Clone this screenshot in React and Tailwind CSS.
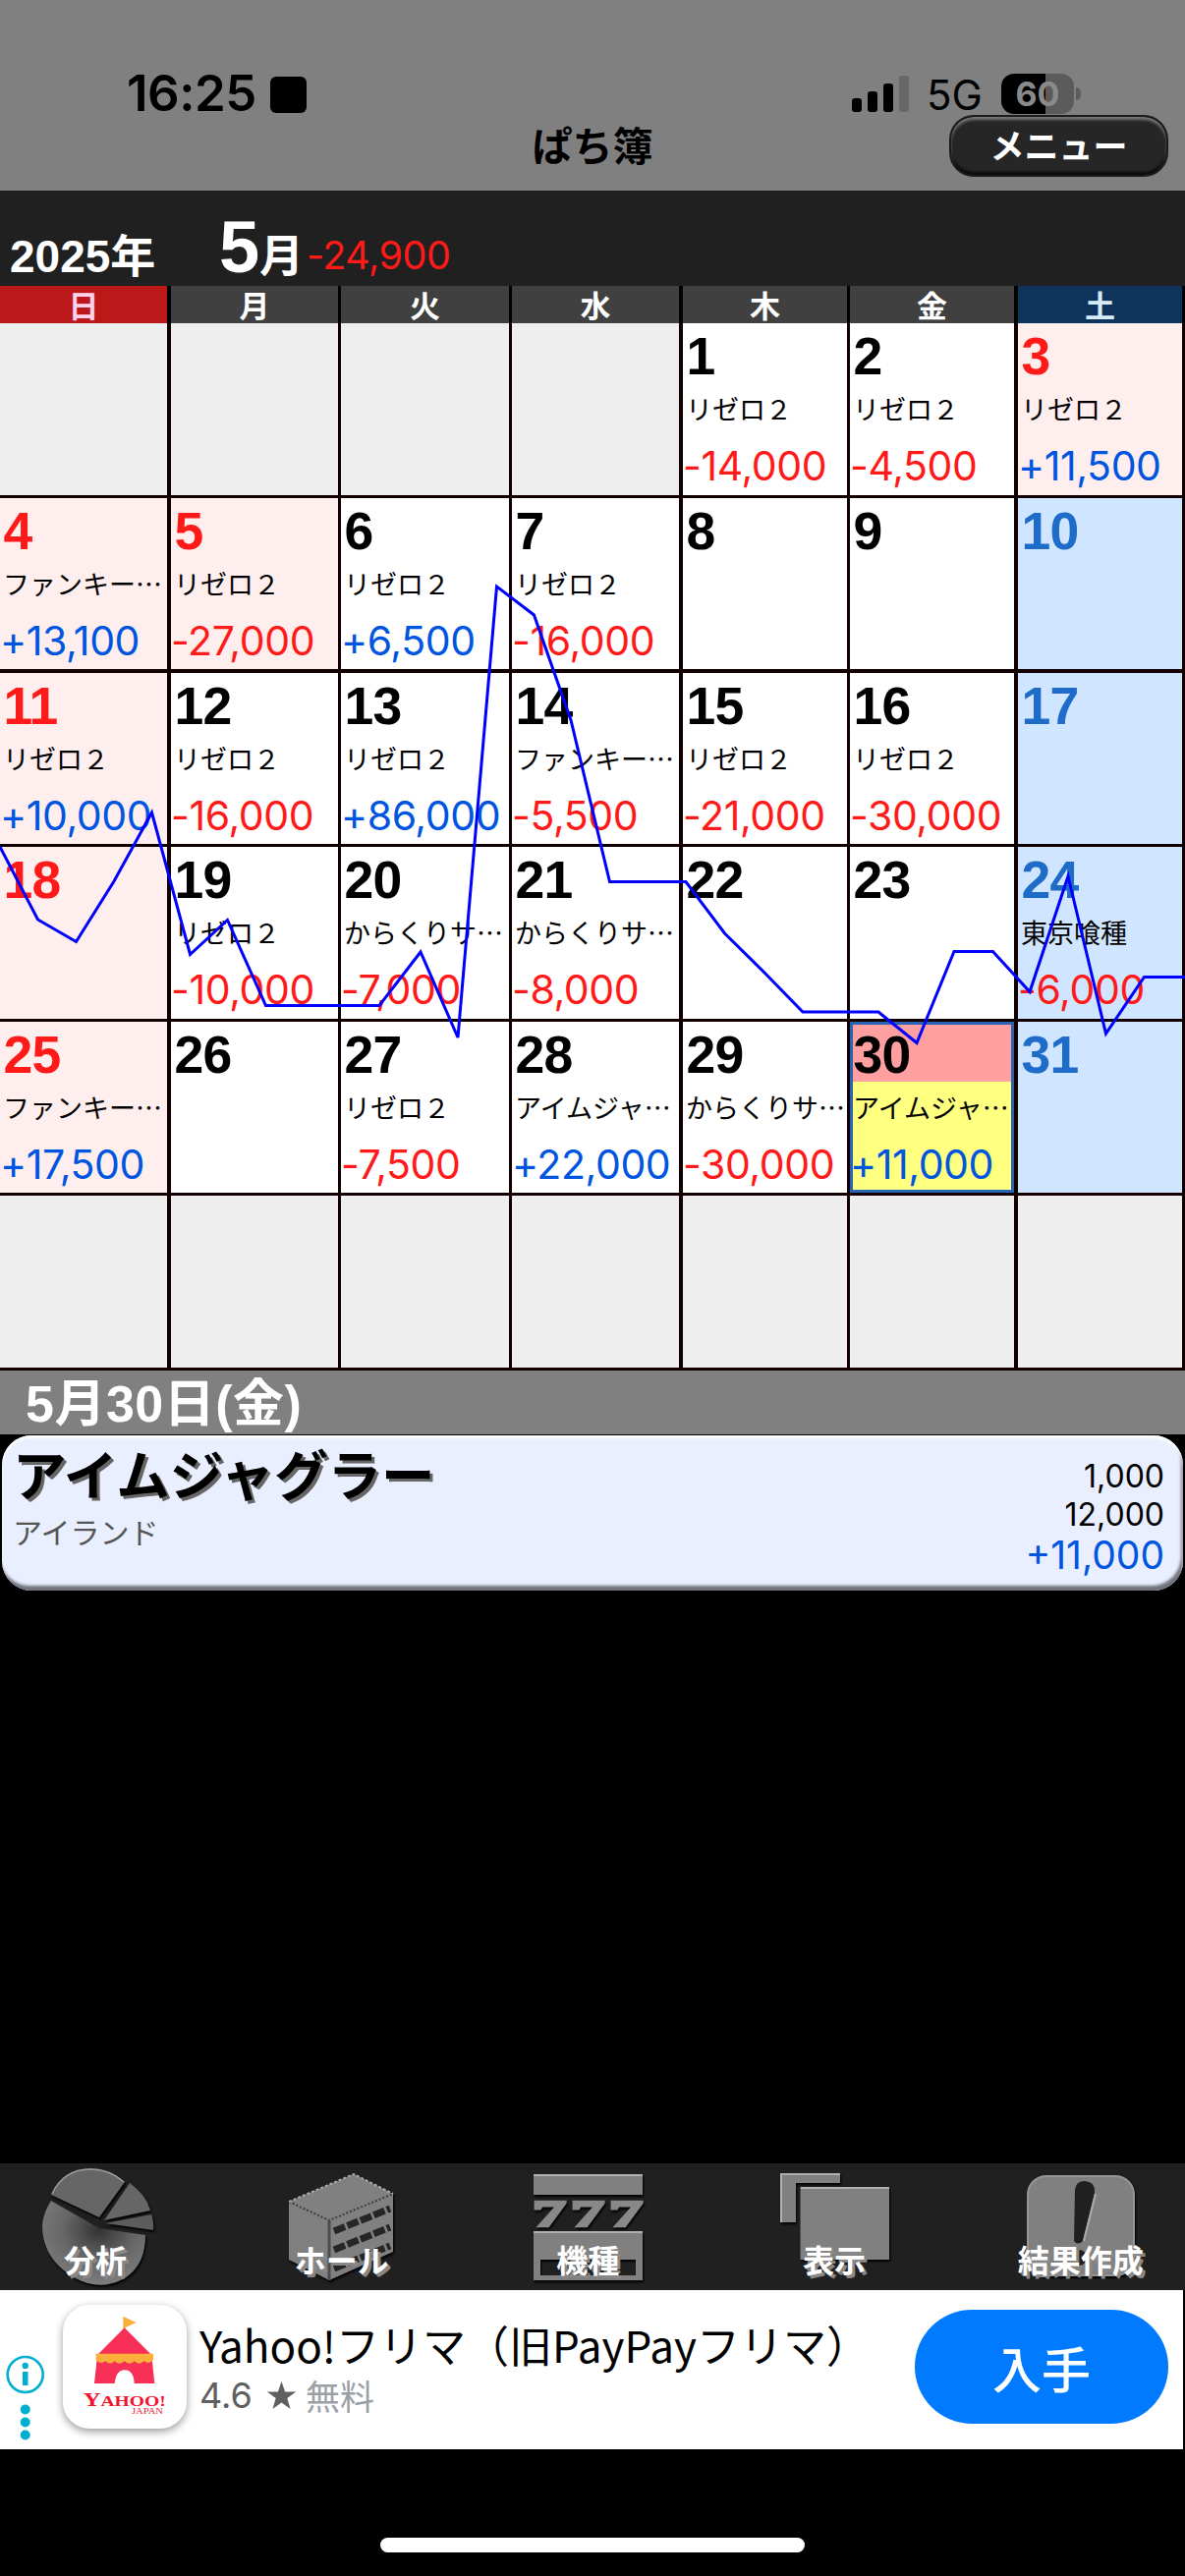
const WEEKDAYS = [
  { label: "日", style: "bg-[#bb1919] text-[#ffd0ec]" },
  { label: "月", style: "bg-[#404040] text-white" },
  { label: "火", style: "bg-[#404040] text-white" },
  { label: "水", style: "bg-[#404040] text-white" },
  { label: "木", style: "bg-[#404040] text-white" },
  { label: "金", style: "bg-[#404040] text-white" },
  { label: "土", style: "bg-[#0f345c] text-[#d6ebf8]" },
];

const COLUMN_BORDERS = [
  "border-r-4",
  "border-r-3",
  "border-r-3",
  "border-r-4",
  "border-r-3",
  "border-r-4",
  "border-r-3",
];

const ROW_BORDERS = [
  "border-b-3",
  "border-b-4",
  "border-b-3",
  "border-b-3",
  "border-b-3",
  "border-b-3",
];

const HOLIDAYS = [3, 4, 5, 11, 18, 25];
const SATURDAYS = [10, 17, 24, 31];
const FIRST_WEEKDAY = 4;
const SELECTED_DAY = 30;

const records = {
  1: { name: "リゼロ２", amount: "-14,000" },
  2: { name: "リゼロ２", amount: "-4,500" },
  3: { name: "リゼロ２", amount: "+11,500" },
  4: { name: "ファンキー…", amount: "+13,100" },
  5: { name: "リゼロ２", amount: "-27,000" },
  6: { name: "リゼロ２", amount: "+6,500" },
  7: { name: "リゼロ２", amount: "-16,000" },
  11: { name: "リゼロ２", amount: "+10,000" },
  12: { name: "リゼロ２", amount: "-16,000" },
  13: { name: "リゼロ２", amount: "+86,000" },
  14: { name: "ファンキー…", amount: "-5,500" },
  15: { name: "リゼロ２", amount: "-21,000" },
  16: { name: "リゼロ２", amount: "-30,000" },
  19: { name: "リゼロ２", amount: "-10,000" },
  20: { name: "からくりサ…", amount: "-7,000" },
  21: { name: "からくりサ…", amount: "-8,000" },
  24: { name: "東京喰種", amount: "-6,000" },
  25: { name: "ファンキー…", amount: "+17,500" },
  27: { name: "リゼロ２", amount: "-7,500" },
  28: { name: "アイムジャ…", amount: "+22,000" },
  29: { name: "からくりサ…", amount: "-30,000" },
  30: { name: "アイムジャ…", amount: "+11,000" },
};

const GRID_COLUMNS = "grid grid-cols-[174px_173px_174px_174px_170px_171px_170px]";

const amountColor = (amount) =>
  amount.startsWith("-") ? "text-[#ff1a1a]" : "text-[#0055e0]";

function StatusBar() {
  return (
    <div className="flex h-[116px] items-end justify-between pl-[129px] pr-[106px]">
      <div className="flex h-[42px] items-center gap-[14px]">
        <span className="font-['Inter'] text-[51px] font-semibold leading-[42px] tracking-[-0.5px]">16:25</span>
        <span className="mt-[3px] size-[37px] rounded-[6px] bg-black" />
      </div>
      <div className="flex h-[42px] items-center">
        <div className="mr-[18px] mt-[-1px] flex h-[38px] items-end gap-[6px]">
          <span className="h-[14px] w-[10px] rounded-[3px] bg-black" />
          <span className="h-[21px] w-[10px] rounded-[3px] bg-black" />
          <span className="h-[29px] w-[10px] rounded-[3px] bg-black" />
          <span className="h-[37px] w-[10px] rounded-[3px] bg-[#686868]" />
        </div>
        <span className="mt-[3px] w-[76px] font-['Inter'] text-[42px] leading-[42px]">5G</span>
        <span className="flex h-[41px] w-[74px] items-center justify-center overflow-hidden rounded-[13px] bg-linear-to-r from-black from-61% to-[#5b5b5b] to-61% font-['Inter'] text-[34px] font-bold text-[#8a8a8a]">
          60
        </span>
        <span className="ml-[2px] h-[13px] w-[5px] rounded-r-full bg-[#5b5b5b]" />
      </div>
    </div>
  );
}

function TitleBar() {
  return (
    <div className="grid h-[78px] grid-cols-[1fr_auto_1fr] items-start">
      <span className="col-start-2 mt-[5px] text-[41px] font-bold leading-[50px]">ぱち簿</span>
      <button className="mr-[17px] mt-px h-[63px] w-[223px] justify-self-end rounded-[25px] border-2 border-[#1c1c1c] bg-[#262626] pb-1 text-[35px] font-bold leading-[50px] text-white shadow-[inset_0_3px_3px_#777,inset_0_-3px_3px_#0a0a0a]">
        メニュー
      </button>
    </div>
  );
}

function MonthHeader() {
  return (
    <div className="flex h-[97px] items-baseline bg-[#202020] font-['Liberation_Sans','Noto_Sans_CJK_JP',sans-serif] font-bold text-white">
      <span className="ml-[10px] w-[213px] text-[46px] leading-[115px]">2025年</span>
      <span className="w-[41px] text-[74px] leading-[115px]">5</span>
      <span className="w-[48px] text-[45px] leading-[115px]">月</span>
      <span className="relative top-[-3px] font-['Inter'] text-[39.5px] font-normal leading-[80px] tracking-[-0.5px] text-[#ff1a1a]">
        -24,900
      </span>
    </div>
  );
}

function DayCell({ day, index }) {
  const borders = `${COLUMN_BORDERS[index % 7]} ${ROW_BORDERS[Math.floor(index / 7)]} border-[#120000]`;

  if (day < 1 || day > 31) {
    return <div className={`bg-[#eeeeee] ${borders}`} />;
  }

  const record = records[day];
  let background = "bg-white";
  let color = "text-black";
  if (HOLIDAYS.includes(day)) {
    background = "bg-[#ffeeee]";
    color = "text-[#ff1a1a]";
  } else if (SATURDAYS.includes(day)) {
    background = "bg-[#d0e5ff]";
    color = "text-[#1e6cc7]";
  }
  if (day === SELECTED_DAY) {
    background =
      "bg-linear-to-b from-[#ff9fa0] from-[61px] to-[#ffff80] to-[61px] shadow-[inset_0_0_0_3px_#2964b4]";
  }

  return (
    <div className={`overflow-hidden whitespace-nowrap pt-[4px] ${background} ${borders}`}>
      <p className={`h-[60px] pl-[3.5px] font-['Liberation_Sans'] text-[53.5px] font-bold leading-[60px] tracking-[-0.8px] ${color}`}>
        {day}
      </p>
      {record && (
        <>
          <p className="mt-[3px] h-[40px] pl-[3px] text-[27px] leading-[40px]">{record.name}</p>
          <p className={`mt-[13px] h-[50px] font-['Inter'] text-[41px] leading-[50px] tracking-[-0.4px] ${amountColor(record.amount)}`}>
            {record.amount}
          </p>
        </>
      )}
    </div>
  );
}

function Calendar() {
  return (
    <div className="bg-[#120000]">
      <div className={`h-[38px] bg-black ${GRID_COLUMNS}`}>
        {WEEKDAYS.map((weekday, i) => (
          <div
            key={weekday.label}
            className={`border-black text-center text-[31px] font-bold leading-[37px] ${weekday.style} ${COLUMN_BORDERS[i]}`}
          >
            {weekday.label}
          </div>
        ))}
      </div>
      <div className={`relative grid-rows-[178px_178px_177px_178px_177px_178px] ${GRID_COLUMNS}`}>
        {Array.from({ length: 42 }, (_, i) => (
          <DayCell key={i} index={i} day={i - FIRST_WEEKDAY + 1} />
        ))}
        {/* running balance */}
        <svg className="absolute inset-0" width="1206" height="1066" fill="none">
          <polyline
            points="0,533 38.5,607 77.5,629.5 116,568 154.5,498 193.5,642.5 231.5,607.5 270.5,694.5 386,694.5 428,640 466,727 505.5,268 543.5,297 581,404 620.5,568.5 698,568.5 737.5,621 778,661 817,701 894,701 933,732.5 971,639.5 1010.5,639.5 1048,680.5 1087,563 1125.5,723 1164.5,665.5 1206,665.5"
            stroke="#0000ff"
            strokeWidth="3"
          />
        </svg>
      </div>
    </div>
  );
}

function RecordCard() {
  return (
    <div className="mx-[2px] mt-px flex h-[158px] justify-between rounded-[30px] bg-[#e9effe] pl-[11px] pr-[19px] shadow-[inset_0_3px_3px_#fff,inset_-2px_-5px_3px_#70717a]">
      <div>
        <p className="mt-[8px] h-[60px] text-[54.5px] font-bold leading-[60px] [text-shadow:3px_3px_0_#666]">
          アイムジャグラー
        </p>
        <p className="mt-[9px] text-[30px] leading-[40px] text-[#555]">アイランド</p>
      </div>
      <div className="pt-[22px] text-right font-['Inter'] text-[32px] leading-[39px]">
        <p>1,000</p>
        <p>12,000</p>
        <p className="text-[39px] leading-[44px] text-[#0055e0]">+11,000</p>
      </div>
    </div>
  );
}

function PieIcon() {
  return (
    <>
      <path d="M35 32Q47 5 75 5Q95 5 110 19L84 55Z" fill="#666" />
      <path d="M36 31Q48 6 75 6Q94 6 109 19" fill="none" stroke="#999" strokeWidth="1.5" />
      <path d="M115 20Q132 32 136 48L89 58Z" fill="#666" />
      <path d="M137 52Q140 60 139 68L90 61Z" fill="#5c5c5c" />
      <path d="M35 38L84 66L131 73Q131 105 108 118Q84 130 60 117Q26 98 26 63Q27 50 35 38Z" fill="url(#pie)" />
    </>
  );
}

function HallIcon() {
  return (
    <>
      <path d="M26 39L92 11L132 31V90L67 119L26 98Z" fill="#808080" />
      <path d="M26 39L67 58L132 31" fill="none" stroke="#3c3c3c" strokeWidth="2" strokeDasharray="2 2" />
      <path d="M26 39L92 11L132 31" fill="none" stroke="#aaa" strokeWidth="2" strokeDasharray="3 2" />
      <path d="M67 58V119" stroke="#4c4c4c" strokeWidth="3" />
      <g stroke="#262626" strokeWidth="7" strokeDasharray="12 2.5">
        <path d="M72 69L129 46" />
        <path d="M72 88L129 65" />
        <path d="M72 107L129 84" />
      </g>
    </>
  );
}

function MachineIcon() {
  return (
    <>
      <rect x="25" y="11" width="111" height="21" fill="#808080" />
      <path d="M25 12H136" stroke="#b0b0b0" strokeWidth="2" />
      <g
        fill="#888"
        stroke="#888"
        strokeWidth="2.5"
        className="font-['Liberation_Serif'] text-[37px] font-bold"
      >
        <text x="24" y="64" textLength="34" lengthAdjust="spacingAndGlyphs">7</text>
        <text x="63" y="64" textLength="34" lengthAdjust="spacingAndGlyphs">7</text>
        <text x="102" y="64" textLength="34" lengthAdjust="spacingAndGlyphs">7</text>
      </g>
      <path fillRule="evenodd" d="M25 69H136V119H25ZM32 98V114H129V98Z" fill="#808080" />
      <path d="M25 70H136" stroke="#b0b0b0" strokeWidth="2" />
    </>
  );
}

function DisplayIcon() {
  return (
    <>
      <path d="M25 10H86V20H41V60H25Z" fill="#808080" />
      <path d="M26 60V11H86" fill="none" stroke="#b0b0b0" strokeWidth="2" />
      <rect x="45.5" y="24" width="90.5" height="74" fill="#808080" />
      <path d="M46 25H136" stroke="#b0b0b0" strokeWidth="2" />
    </>
  );
}

function ResultIcon() {
  return (
    <>
      <rect x="26" y="13" width="108" height="101" rx="19" fill="#808080" stroke="#969696" strokeWidth="2" />
      <path d="M74 27Q75 18 84 18Q95 19 94 30L82 79Q77 84 73 79Z" fill="#202020" />
      <path d="M95 31L83 79" stroke="#aaa" strokeWidth="2" />
      <circle cx="78" cy="96" r="8" fill="#202020" />
    </>
  );
}

const tabs = [
  { label: "分析", Icon: PieIcon },
  { label: "ホール", Icon: HallIcon },
  { label: "機種", Icon: MachineIcon },
  { label: "表示", Icon: DisplayIcon },
  { label: "結果作成", Icon: ResultIcon },
];

function TabBar() {
  return (
    <nav className="flex h-[129px] gap-[90.7px] bg-[#202020] pl-[17px]">
      {tabs.map(({ label, Icon }) => (
        <button key={label} className="relative h-[129px] w-[160px] shrink-0">
          <svg viewBox="0 0 160 129" className="absolute inset-0 size-full drop-shadow-[1px_2px_1px_#000]">
            <defs>
              <radialGradient id="pie" cx="0.55" cy="0.35" r="0.7">
                <stop offset="0" stopColor="#333" />
                <stop offset="0.5" stopColor="#666" />
                <stop offset="1" stopColor="#808080" />
              </radialGradient>
            </defs>
            <Icon />
          </svg>
          <span className="absolute inset-x-0 top-[77px] text-center text-[32px] font-bold leading-[40px] text-white [text-shadow:3px_3px_0_#888]">
            {label}
          </span>
        </button>
      ))}
    </nav>
  );
}

function FleaMarketLogo() {
  return (
    <svg width="125" height="126" viewBox="0 0 375 378">
      <path d="M184 35L224 54L190 70V76H184Z" fill="#fbb03b" />
      <path d="M188 70L270 152H106Z" fill="#f82f57" />
      <path d="M104 165H272L280 240H218Q216 199 188 199Q162 200 158 240H96Z" fill="#f82f57" />
      <path
        d="M101 149H276V168Q264 184 247 172Q234 186 218 172Q204 186 188 172Q172 186 158 172Q144 186 130 172Q114 184 101 168Z"
        fill="#fbb03b"
      />
      <g fill="#f0142f" className="font-['Liberation_Serif']">
        <text x="62" y="309" fontSize="46" fontWeight="bold" textLength="252" lengthAdjust="spacingAndGlyphs">
          <tspan fontSize="58">Y</tspan>AHOO!
        </text>
        <text x="210" y="334" fontSize="27" textLength="96" lengthAdjust="spacingAndGlyphs">
          JAPAN
        </text>
      </g>
    </svg>
  );
}

function AdBanner() {
  return (
    <div className="mr-[2px] flex h-[162px] bg-white">
      <svg width="51" height="162" fill="#00aed1" className="shrink-0">
        <circle cx="25.7" cy="86" r="18" fill="none" stroke="#00aed1" strokeWidth="2.6" />
        <circle cx="25.7" cy="77" r="3.2" />
        <path d="M23 83H28.5V97H23Z" />
        <circle cx="25.7" cy="121.5" r="5" />
        <circle cx="25.7" cy="134.5" r="5" />
        <circle cx="25.7" cy="147.5" r="5" />
      </svg>
      <div className="ml-[13px] mt-[15px] size-[126px] shrink-0 rounded-[27px] bg-white shadow-[0_3px_9px_rgba(0,0,0,0.4)]">
        <FleaMarketLogo />
      </div>
      <div className="ml-[13px] flex-1 whitespace-nowrap">
        <p className="mt-[26px] h-[58px] text-[44px] leading-[58px]">Yahoo!フリマ（旧PayPayフリマ）</p>
        <p className="mt-px flex h-[44px] items-center text-[35px] leading-[44px] text-[#5f6062]">
          <span className="w-[68px] font-['Inter'] text-[36px]">4.6</span>
          <svg width="31" height="31" viewBox="0 0 24 24" fill="#5f6062">
            <path d="M12 .8L14.8 8.9H23.4L16.5 14L19 22.5L12 17.4L5 22.5L7.5 14L.6 8.9H9.2Z" />
          </svg>
          <span className="ml-[9px] text-[#9aa0a6]">無料</span>
        </p>
      </div>
      <button className="mr-[15px] mt-[20px] h-[116px] w-[258px] rounded-full bg-[#007bff] text-[50px] font-medium leading-[116px] text-white">
        入手
      </button>
    </div>
  );
}

export default function App() {
  return (
    <div className="flex h-[2622px] w-[1206px] flex-col overflow-hidden bg-black font-['Noto_Sans_CJK_JP',sans-serif] text-black">
      <header className="bg-[#808080]">
        <StatusBar />
        <TitleBar />
      </header>
      <MonthHeader />
      <Calendar />
      <h2 className="h-[65px] bg-[#808080] pl-[26px] font-['Liberation_Sans','Noto_Sans_CJK_JP',sans-serif] text-[52px] font-bold leading-[69px] tracking-[0.5px] text-white">
        5月30日(金)
      </h2>
      <RecordCard />
      <div className="flex-1" />
      <TabBar />
      <AdBanner />
      <div className="flex h-[129px] justify-center">
        <span className="mt-[90px] h-[15px] w-[432px] rounded-full bg-white" />
      </div>
    </div>
  );
}
